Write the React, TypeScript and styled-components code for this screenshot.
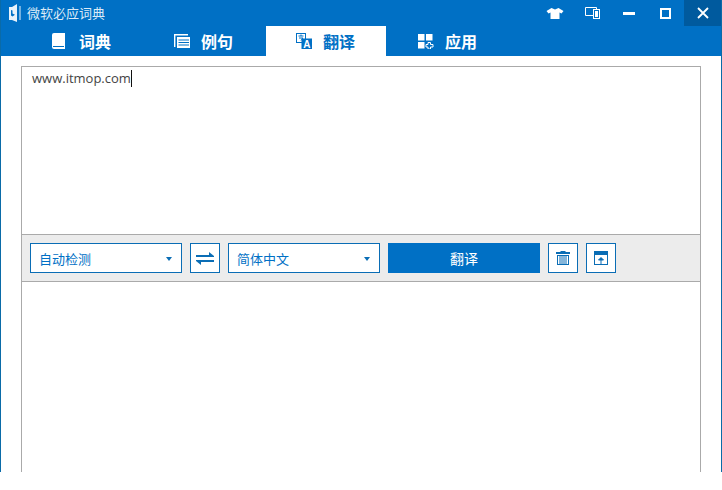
import React from "react";
import styled, { createGlobalStyle } from "styled-components";

const CJK = `"Noto Sans CJK SC", "Noto Sans", sans-serif`;
const BLUE = "#0070c5";

const Global = createGlobalStyle`
  html, body { margin: 0; padding: 0; background: #fff; }
  body { font-family: ${CJK}; }
`;

const Window = styled.div`
  width: 722px;
  height: 472px;
  box-sizing: border-box;
  border-left: 1px solid #0a6ba8;
  border-right: 1px solid #0a6ba8;
  display: flex;
  flex-direction: column;
  overflow: hidden;
  background: #fff;
`;

const TitleBar = styled.div`
  height: 26px;
  flex: none;
  background: ${BLUE};
  display: flex;
  align-items: center;
  padding-left: 8px;
  color: #dcebf7;
  font-size: 13px;
`;

const Logo = styled.svg`
  width: 12px;
  height: 18px;
  margin-right: 6px;
  flex: none;
`;

const TitleText = styled.span`
  flex: 1;
  line-height: 26px;
`;

const WinButtons = styled.div`
  display: flex;
  height: 26px;
  align-items: stretch;
`;

const WinButton = styled.div<{ $w: number; $active?: boolean }>`
  width: ${(p) => p.$w}px;
  display: flex;
  align-items: center;
  justify-content: center;
  background: ${(p) => (p.$active ? "#005a9e" : "transparent")};
`;

const TabBar = styled.div`
  height: 30px;
  flex: none;
  background: ${BLUE};
  display: flex;
  padding-left: 25px;
`;

const Tab = styled.div<{ $active?: boolean; $pad: number }>`
  width: 120px;
  height: 30px;
  box-sizing: border-box;
  padding: 0 0 1px ${(p) => p.$pad}px;
  background: ${(p) => (p.$active ? "#fff" : "transparent")};
  color: ${(p) => (p.$active ? BLUE : "#fff")};
  display: flex;
  align-items: center;
  gap: 11px;
  font-size: 16px;
  font-weight: 700;
`;

const TabIcon = styled.svg`
  width: 16px;
  height: 16px;
  flex: none;
`;

const Content = styled.div`
  flex: 1;
  min-height: 0;
  padding: 10px 20px 0 20px;
  display: flex;
  background: #fff;
`;

const Panel = styled.div`
  flex: 1;
  border: 1px solid #aaa;
  border-bottom: none;
  display: flex;
  flex-direction: column;
`;

const InputArea = styled.div`
  height: 167px;
  flex: none;
  box-sizing: border-box;
  padding: 2px 10px;
  font-family: "Open Sans", "Noto Sans", sans-serif;
  font-size: 13px;
  line-height: 19px;
  color: #444;
`;

const Caret = styled.span`
  display: inline-block;
  width: 1px;
  height: 17px;
  background: #111;
  vertical-align: -4px;
`;

const Toolbar = styled.div`
  height: 48px;
  flex: none;
  box-sizing: border-box;
  background: #ececec;
  border-top: 1px solid #aaa;
  border-bottom: 1px solid #aaa;
  display: flex;
  align-items: center;
  gap: 8px;
  padding-left: 8px;
`;

const Select = styled.div`
  width: 152px;
  height: 30px;
  box-sizing: border-box;
  background: #fff;
  border: 1px solid #0a6db5;
  color: ${BLUE};
  font-size: 13px;
  display: flex;
  align-items: center;
  justify-content: space-between;
  padding: 1px 9px 0 8px;
`;

const Arrow = styled.span`
  width: 0;
  height: 0;
  border-left: 3px solid transparent;
  border-right: 3px solid transparent;
  border-top: 4px solid #0a6db5;
`;

const IconButton = styled.div`
  width: 30px;
  height: 30px;
  box-sizing: border-box;
  background: #fff;
  border: 1px solid #0a6db5;
  display: flex;
  align-items: center;
  justify-content: center;
`;

const Primary = styled.div`
  width: 152px;
  height: 30px;
  box-sizing: border-box;
  padding-bottom: 1px;
  background: ${BLUE};
  color: #fff;
  font-size: 14px;
  display: flex;
  align-items: center;
  justify-content: center;
`;

const Output = styled.div`
  flex: 1;
`;

export default function App() {
  return (
    <>
      <Global />
      <Window>
        <TitleBar>
          <Logo viewBox="0 0 12 18">
            <path d="M0 3 L3 3 L8 0 V18 L3 16 L0 16 Z" fill="#e8f2fa" />
            <path d="M11 2 V16" stroke="#e8f2fa" strokeWidth="1" />
            <path d="M2 6 L3.5 6.5 V9.5 L6 10.7 L3.5 12.5 L2 11.5 Z" fill={BLUE} />
          </Logo>
          <TitleText>微软必应词典</TitleText>
          <WinButtons>
            <WinButton $w={39}>
              <svg width="18" height="11" viewBox="0 0 18 11">
                <path d="M5.5 0 L9 1.5 L12.5 0 L17.5 3 L15.5 5.5 L13.5 4.5 V11 H4.5 V4.5 L2.5 5.5 L0.5 3 Z" fill="#fff" />
              </svg>
            </WinButton>
            <WinButton $w={36}>
              <svg width="15" height="12" viewBox="0 0 15 12">
                <path d="M8.5 8.5 H.5 V.5 H11.5 V2" fill="none" stroke="#fff" />
                <rect x="8.5" y="2.5" width="6" height="9" fill={BLUE} stroke="#fff" />
                <rect x="10" y="4" width="3" height="6" fill="#fff" />
              </svg>
            </WinButton>
            <WinButton $w={37}>
              <svg width="12" height="3" viewBox="0 0 12 3"><rect width="12" height="3" fill="#fff" /></svg>
            </WinButton>
            <WinButton $w={37}>
              <svg width="11" height="11" viewBox="0 0 11 11"><rect x="1" y="1" width="9" height="9" fill="none" stroke="#fff" strokeWidth="2" /></svg>
            </WinButton>
            <WinButton $w={37} $active>
              <svg width="12" height="12" viewBox="0 0 12 12"><path d="M1 1 L11 11 M11 1 L1 11" stroke="#fff" strokeWidth="1.8" /></svg>
            </WinButton>
          </WinButtons>
        </TitleBar>
        <TabBar>
          <Tab $pad={26}>
            <TabIcon viewBox="0 0 16 16">
              <path d="M2 0 H13 V16 H2 Q0 16 0 14 V2 Q0 0 2 0 Z" fill="#fff" />
              <path d="M1 13.5 H12" stroke={BLUE} strokeWidth="1" />
            </TabIcon>
            词典
          </Tab>
          <Tab $pad={28}>
            <TabIcon viewBox="0 0 16 16">
              <path d="M.7 14 V1.7 H14" fill="none" stroke="#fff" strokeWidth="1.4" />
              <rect x="3" y="4" width="13" height="11" fill="#fff" />
              <path d="M4.5 7 H15 M4.5 9.5 H15 M4.5 12 H15" stroke={BLUE} strokeWidth="1" />
            </TabIcon>
            例句
          </Tab>
          <Tab $active $pad={30}>
            <TabIcon viewBox="0 0 16 16">
              <rect x=".5" y=".5" width="9" height="9" fill="#fff" stroke={BLUE} />
              <path d="M2.5 3 H7.5 M5 1.5 V3 M3 5 H7 L5 7.5" fill="none" stroke={BLUE} strokeWidth="1" />
              <rect x="5.5" y="5.5" width="10.5" height="10.5" fill={BLUE} />
              <text x="10.8" y="14.5" fontSize="10" fontFamily="Liberation Sans" fontWeight="700" fill="#fff" textAnchor="middle">A</text>
            </TabIcon>
            翻译
          </Tab>
          <Tab $pad={32}>
            <TabIcon viewBox="0 0 16 16">
              <rect x="0" y="1" width="6.5" height="6.5" fill="#fff" />
              <rect x="8" y="1" width="6.5" height="6.5" fill="#fff" />
              <rect x="0" y="9" width="6.5" height="6.5" fill="#fff" />
              <path d="M10 9.5 H12.5 V11.5 H15 V14 H12.5 V16 H10 V14 H8 V11.5 H10 Z" fill="none" stroke="#fff" />
            </TabIcon>
            应用
          </Tab>
        </TabBar>
        <Content>
          <Panel>
            <InputArea>
              www.itmop.com<Caret />
            </InputArea>
            <Toolbar>
              <Select>
                自动检测
                <Arrow />
              </Select>
              <IconButton>
                <svg width="18" height="13" viewBox="0 0 18 13">
                  <path d="M0 3 H13 V0 L18 4 V5 H0 Z" fill="#0a6db5" />
                  <path d="M18 10 H5 V13 L0 9 V8 H18 Z" fill="#0a6db5" />
                </svg>
              </IconButton>
              <Select>
                简体中文
                <Arrow />
              </Select>
              <Primary>翻译</Primary>
              <IconButton>
                <svg width="14" height="14" viewBox="0 0 14 14">
                  <path d="M4.5 0 H9.5 V1 H14 V3 H0 V1 H4.5 Z" fill="#0a6db5" />
                  <rect x="1.5" y="4.5" width="11" height="9" fill="none" stroke="#0a6db5" />
                  <path d="M4 5 V13 M6 5 V13 M8 5 V13 M10 5 V13" stroke="#0a6db5" />
                </svg>
              </IconButton>
              <IconButton>
                <svg width="14" height="14" viewBox="0 0 14 14">
                  <rect x=".5" y=".5" width="13" height="13" fill="none" stroke="#0a6db5" />
                  <rect x="0" y="0" width="14" height="4" fill="#0a6db5" />
                  <path d="M7 14 V7 M4.5 9 L7 6.5 L9.5 9 Z" fill="#0a6db5" stroke="#0a6db5" />
                </svg>
              </IconButton>
            </Toolbar>
            <Output />
          </Panel>
        </Content>
      </Window>
    </>
  );
}
